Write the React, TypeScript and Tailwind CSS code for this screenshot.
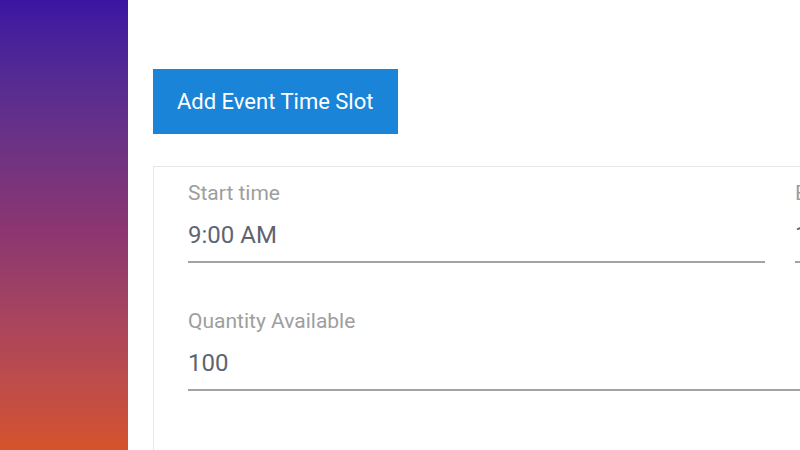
const Field = ({ label, value, width }: { label: string; value: string; width: string }) => (
  <div className={`flex flex-col shrink-0 ${width}`}>
    <label className="text-[21px] leading-[24px] text-[#9e9e9e]">{label}</label>
    <div className="mt-[15px] pb-[11px] border-b-2 border-[#a3a3a3] text-[24px] leading-[30px] text-[#5f6470]">
      {value}
    </div>
  </div>
);

const App = () => {
  return (
    <div className="flex w-[800px] h-[450px] overflow-hidden bg-white font-['Roboto','Liberation_Sans',sans-serif]">
      <aside className="w-[128px] h-full shrink-0 bg-gradient-to-b from-[#3c14a2] via-[#8a3572] to-[#d5532a]" />
      <main className="flex flex-col items-start pl-[25px] pt-[69px]">
        <button className="h-[65px] w-[245px] shrink-0 bg-[#1a84d8] text-white text-[22px] pl-[24px] text-left">
          Add Event Time Slot
        </button>
        <div className="mt-[32px] w-[760px] h-[300px] shrink-0 border border-[#e6e6e6] pl-[34px] pt-[14px]">
          <div className="flex gap-[30px]">
            <Field label="Start time" value="9:00 AM" width="w-[577px]" />
            <Field label="End time" value="10:00 AM" width="w-[300px]" />
          </div>
          <div className="mt-[46px]">
            <Field label="Quantity Available" value="100" width="w-[700px]" />
          </div>
        </div>
      </main>
    </div>
  );
};

export default App;
